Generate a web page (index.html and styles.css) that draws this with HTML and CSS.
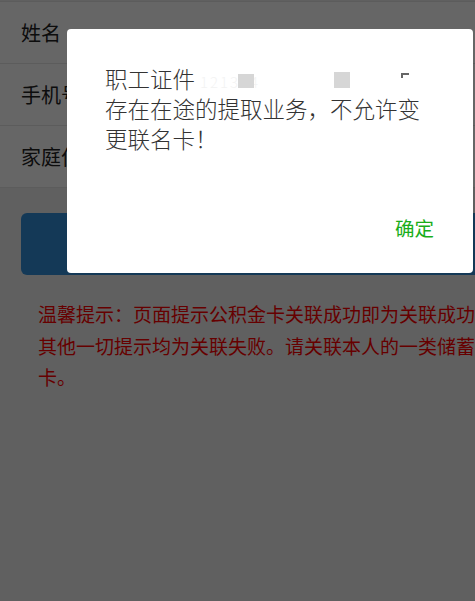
FILE: index.html
```html
<!DOCTYPE html>
<html lang="zh-CN">
<head>
    <meta charset="UTF-8">
    <meta name="viewport" content="width=device-width, initial-scale=1.0">
    <title>关联联名卡</title>
    <link rel="stylesheet" href="styles.css">
</head>
<body>
    <div class="page">
        <div class="form">
            <div class="row">
                <span class="label">姓名</span>
            </div>
            <div class="row">
                <span class="label">手机号</span>
            </div>
            <div class="row">
                <span class="label">家庭住址</span>
            </div>
        </div>

        <button class="submit-btn">关联</button>

        <p class="tip">温馨提示：页面提示公积金卡关联成功即为关联成功，其他一切提示均为关联失败。请关联本人的一类储蓄卡。</p>
    </div>

    <div class="mask"></div>
    <div class="dialog">
        <div class="dialog-bd">职工证件 <span class="id-no"><span class="faint">121324</span><i class="blk blk-1"></i><i class="blk blk-2"></i><i class="tick"></i></span>存在在途的提取业务，不允许变更联名卡！</div>
        <div class="dialog-ft">
            <a href="#" class="dialog-btn">确定</a>
        </div>
    </div>
</body>
</html>
```

FILE: styles.css
```css
body {
    margin: 0;
    padding: 0;
    background: #f0f0f0;
    font-family: "Noto Sans CJK SC", sans-serif;
    color: #222;
    overflow: hidden;
    height: 100vh;
}

.page {
    width: 540px;
}

.form {
    margin-top: 1px;
    background: #fff;
    border-top: 1px solid #e6e6e6;
}

.row {
    height: 61px;
    display: flex;
    align-items: center;
    padding: 0 21px;
    border-bottom: 1px solid #e6e6e6;
    font-size: 20px;
}

.submit-btn {
    display: block;
    margin: 25px 21px 0;
    width: 498px;
    height: 62px;
    border: none;
    border-radius: 6px;
    background: #3390da;
    color: #fff;
    font-family: inherit;
    font-size: 20px;
}

.tip {
    margin: 23px 0 0;
    padding: 0 38px;
    font-size: 19px;
    line-height: 31.5px;
    color: #ff0000;
}

.mask {
    position: fixed;
    top: 0;
    left: 0;
    right: 0;
    bottom: 0;
    background: rgba(0, 0, 0, 0.6);
}

/* dialog sits centred over the 540px page */
.dialog {
    position: fixed;
    top: 29px;
    left: 67px;
    width: 406px;
    height: 244px;
    background: #fff;
    border-radius: 4px;
    display: flex;
    flex-direction: column;
}

.dialog-bd {
    padding: 34px 38px 0;
    font-size: 22.5px;
    font-weight: 300;
    line-height: 30px;
    color: #333;
}

.id-no {
    display: inline-block;
    vertical-align: top;
    width: 228px;
    height: 30px;
    white-space: nowrap;
}

.faint {
    font-size: 15px;
    color: #f3f3f3;
    letter-spacing: 2px;
}

.blk {
    display: inline-block;
    width: 16px;
    height: 14px;
    background: #d6d6d6;
}

.blk-1 {
    margin-left: -22px;
}

.blk-2 {
    margin-left: 80px;
    height: 16px;
}

.tick {
    display: inline-block;
    width: 8px;
    height: 5px;
    margin-left: 51px;
    margin-bottom: 10px;
    border-top: 2px solid #666;
    border-left: 2px solid #666;
    box-sizing: border-box;
}

.dialog-ft {
    margin-top: auto;
    padding: 0 39px 20px;
    text-align: right;
    line-height: 48px;
}

.dialog-btn {
    font-size: 19.5px;
    color: #1aad19;
    text-decoration: none;
}
```
